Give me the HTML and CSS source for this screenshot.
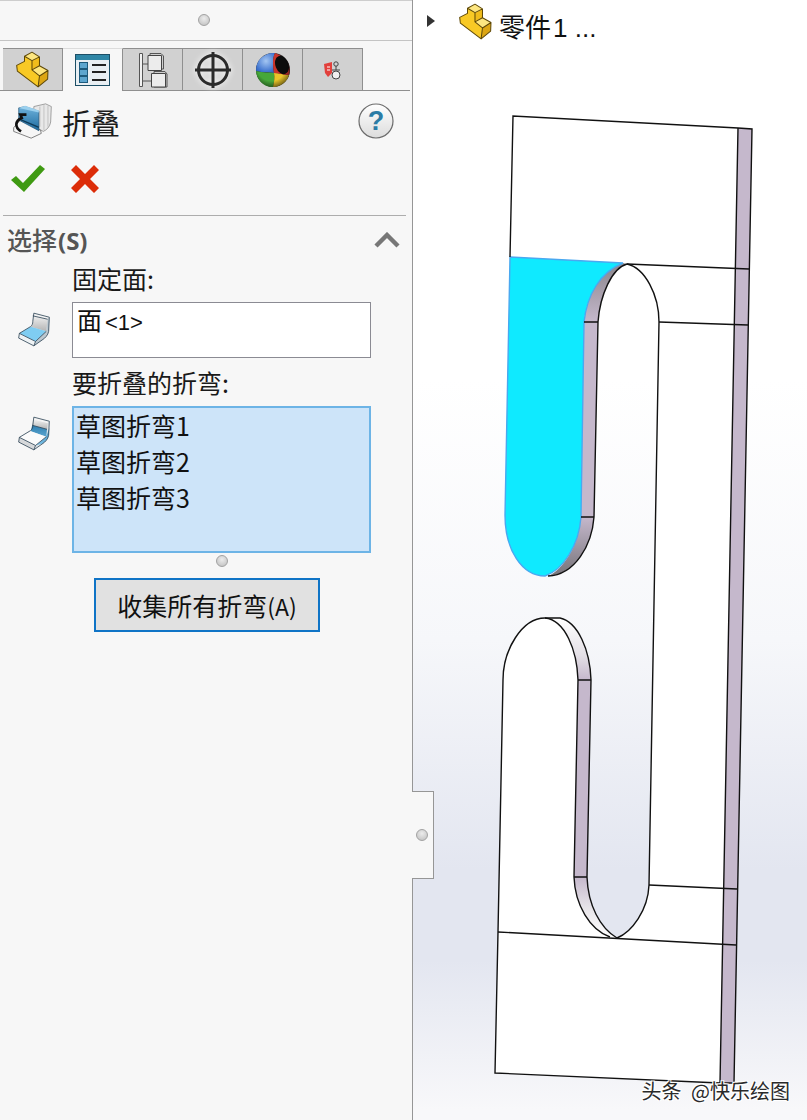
FILE: index.html
```html
<!DOCTYPE html>
<html lang="zh">
<head>
<meta charset="utf-8">
<title>折叠</title>
<link rel="stylesheet" href="styles.css">
</head>
<body>
<svg class="defs" width="0" height="0" aria-hidden="true">
  <defs>
    <linearGradient id="wallShade" x1="0" y1="0" x2="0" y2="1">
      <stop offset="0" stop-color="#efefef"/><stop offset="1" stop-color="#b4b4b4"/>
    </linearGradient>
    <linearGradient id="bandBlue" x1="0" y1="0" x2="0" y2="1">
      <stop offset="0" stop-color="#2f7fb0"/><stop offset="1" stop-color="#7cc2e8"/>
    </linearGradient>
    <linearGradient id="plateBlue" x1="0" y1="0" x2="0" y2="1">
      <stop offset="0" stop-color="#6fb2dc"/><stop offset="1" stop-color="#1c6a9e"/>
    </linearGradient>
    <linearGradient id="arcDark" x1="0" y1="0" x2="0" y2="1">
      <stop offset="0" stop-color="#8a868c"/><stop offset="1" stop-color="#c5b8cc"/>
    </linearGradient>
    <linearGradient id="arcDarkLow" x1="0" y1="0" x2="0" y2="1">
      <stop offset="0" stop-color="#c5b8cc"/><stop offset="1" stop-color="#77747a"/>
    </linearGradient>
    <linearGradient id="arcPale" x1="0" y1="0" x2="0" y2="1">
      <stop offset="0" stop-color="#ffffff"/><stop offset=".6" stop-color="#e4e0e6"/><stop offset="1" stop-color="#c5b8cc"/>
    </linearGradient>
    <linearGradient id="arcPaleLow" x1="0" y1="0" x2="0" y2="1">
      <stop offset="0" stop-color="#c5b8cc"/><stop offset=".5" stop-color="#e6e3e8"/><stop offset="1" stop-color="#ffffff"/>
    </linearGradient>
    <linearGradient id="helpFill" x1="0" y1="0" x2="0" y2="1">
      <stop offset="0" stop-color="#ffffff"/><stop offset="1" stop-color="#dcdcdc"/>
    </linearGradient>
    <radialGradient id="ballBlue" gradientUnits="userSpaceOnUse" cx="11" cy="9" r="18">
      <stop offset="0" stop-color="#a4c6f2"/><stop offset=".6" stop-color="#3f74cf"/><stop offset="1" stop-color="#1b4698"/>
    </radialGradient>
    <radialGradient id="ballShade" cx=".45" cy=".4" r=".6">
      <stop offset=".7" stop-color="#000" stop-opacity="0"/><stop offset="1" stop-color="#000" stop-opacity=".45"/>
    </radialGradient>
    <symbol id="part" viewBox="53 153 97 108">
      <path d="M57 212 55 195 78 183 78 168 100 181 100 208 122 226 118 258Z" fill="#f8c925"/>
      <path d="M78 168 100 156 122 170 100 181Z" fill="#fde680"/>
      <path d="M100 181 122 170 122 196 100 208Z" fill="#f0bc1c"/>
      <path d="M100 208 122 196 147 210 122 226Z" fill="#fde680"/>
      <path d="M122 226 147 210 146 235 118 258Z" fill="#dca513"/>
      <path d="M78 168 100 156 122 170 122 196 147 210 146 235 118 258 57 212 55 195 78 183ZM78 168 100 181 122 170M100 181 100 208 122 226 147 210M100 208 122 196M122 226 118 258" fill="none" stroke="#5e4806" stroke-width="3" stroke-linejoin="round"/>
    </symbol>
    <symbol id="face-floor" viewBox="38 35 95 103">
      <path d="M85 38 131 50 129 92C127 104 118 112 112 116L85 135 40 112 42 98 75 78 82 72Z" fill="#dfe3e6"/>
      <path d="M85 38 131 50 126 56 82 46Z" fill="#f4f4f4"/>
      <path d="M82 46 126 56 122 92 76 78 82 72Z" fill="url(#wallShade)"/>
      <path d="M42 98 76 78 122 92 90 122Z" fill="#7fcdf2"/>
      <path d="M42 98 90 122 85 135 40 112Z" fill="#eef2f4"/>
      <path d="M90 122 122 92 126 56 131 50 129 92C127 104 118 112 112 116L85 135Z" fill="#bcc8d0"/>
      <path d="M85 38 131 50 129 92C127 104 118 112 112 116L85 135 40 112 42 98 75 78C80 74 82 70 82 62ZM42 98 90 122 122 92M90 122 85 135M82 46 126 56" fill="none" stroke="#2d4355" stroke-width="2.4" stroke-linejoin="round"/>
    </symbol>
    <symbol id="face-bend" viewBox="38 35 95 103">
      <path d="M85 38 131 50 129 92C127 104 118 112 112 116L85 135 40 112 42 98 75 78 82 72Z" fill="#dfe3e6"/>
      <path d="M85 38 131 50 126 56 82 46Z" fill="#f4f4f4"/>
      <path d="M82 46 126 56 124 74 80 62Z" fill="url(#wallShade)"/>
      <path d="M80 62 124 74 122 96 131 70 129 92C127 104 120 110 112 116L90 122 122 96 76 80Z" fill="url(#bandBlue)"/>
      <path d="M42 98 76 80 122 96 90 122Z" fill="#fbfbfb"/>
      <path d="M42 98 90 122 85 135 40 112Z" fill="#d6d8da"/>
      <path d="M85 38 131 50 129 92C127 104 118 112 112 116L85 135 40 112 42 98 75 78C80 74 82 70 82 62ZM42 98 90 122 122 96M90 122 85 135M80 62 124 74" fill="none" stroke="#2d4355" stroke-width="2.4" stroke-linejoin="round"/>
    </symbol>
  </defs>
</svg>

<div class="app">
  <aside class="panel">
    <div class="grip"><span class="dot"></span></div>

    <nav class="tabs">
      <div class="tab">
        <svg width="33" height="37"><use href="#part"/></svg>
      </div>
      <div class="tab tab-active">
        <svg width="36" height="33" viewBox="0 0 36 33">
          <rect x=".5" y=".5" width="34" height="31" fill="#e9eff3" stroke="#1d4f66"/>
          <rect x="1" y="1" width="33" height="5" fill="#2f86a6"/>
          <g fill="#5da6cf" stroke="#1d5a7c">
            <rect x="4.5" y="8.5" width="8" height="6"/><rect x="4.5" y="15.5" width="8" height="6"/><rect x="4.5" y="22.5" width="8" height="6"/>
          </g>
          <path d="M17 11H31M17 18H31M17 26H31" stroke="#222" stroke-width="2"/>
        </svg>
      </div>
      <div class="tab">
        <svg width="30" height="36" viewBox="0 0 30 36">
          <path d="M1.500 1.500H4.500V34.500H1.500ZM4.500 12H10M4.500 29H14" fill="#f2f2f2" stroke="#555"/>
          <path d="M12 1.500H23L25.500 4V17H12Z" fill="#cfcfcf" stroke="#555"/>
          <path d="M10 3.500H23.500V18.500H10Z" fill="#ececec" stroke="#444"/>
          <path d="M16 19.500H27L29 22V35H16Z" fill="#cfcfcf" stroke="#555"/>
          <path d="M13.500 21.500H27.500V35H13.500Z" fill="#ececec" stroke="#444"/>
        </svg>
      </div>
      <div class="tab">
        <svg class="icon-glow" width="38" height="38" viewBox="0 0 38 38">
          <circle cx="19" cy="19" r="14.500" fill="none" stroke="#2b2b2b" stroke-width="3"/>
          <path d="M1 19H37M19 1V37" stroke="#2b2b2b" stroke-width="3"/>
        </svg>
      </div>
      <div class="tab">
        <svg width="36" height="36" viewBox="0 0 36 36">
          <circle cx="18" cy="18" r="17" fill="#2a2a2a"/>
          <path d="M18 1A17 17 0 0 0 1 19C8 21 14 20 19 21C18 14 17 7 20 1Z" fill="url(#ballBlue)"/>
          <path d="M19 21C14 20 8 21 1 19A17 17 0 0 0 18 35C19 30 20 26 19 21Z" fill="#46a83a"/>
          <path d="M19 21C20 26 19 30 18 35A17 17 0 0 0 34 23C29 23 24 21 19 21Z" fill="#e9c52a"/>
          <path d="M19 21C24 21 29 23 34 23C36 15 33 6 20 1C17 7 18 14 19 21Z" fill="#c8342c"/>
          <ellipse cx="27" cy="13" rx="6.500" ry="9.500" transform="rotate(-22 27 13)" fill="#0c0c0c"/>
          <circle cx="18" cy="18" r="17" fill="url(#ballShade)"/>
        </svg>
      </div>
      <div class="tab">
        <svg width="20" height="20" viewBox="0 0 20 20">
          <path d="M1 4 9 2V13L5 17 2 13Z" fill="#e2403c"/>
          <path d="M4 7H7M4 10H7" stroke="#fff" stroke-width="1.200"/>
          <circle cx="13" cy="4" r="2.200" fill="none" stroke="#444"/>
          <path d="M13 6V10M9 10H17" stroke="#444"/>
          <circle cx="13" cy="15" r="4" fill="#f0f0f0" stroke="#444"/>
        </svg>
      </div>
    </nav>

    <header class="title-row">
      <svg class="title-icon" width="39" height="36" viewBox="38 312 116 106">
        <path d="M100 322 135 314 152 322 150 368C148 382 138 392 128 396L100 380Z" fill="#e8e8e8" stroke="#7c7c7c" stroke-width="2"/>
        <path d="M118 322V382M130 318V392M142 320V382" stroke="#b0b0b0" stroke-width="2" fill="none"/>
        <path d="M40 385 60 362 120 392 122 402 92 416 40 396Z" fill="#f6f6f6" stroke="#666" stroke-width="2.400"/>
        <path d="M55 326 74 322 115 336V394L55 362Z" fill="url(#plateBlue)" stroke="#1e4e70" stroke-width="2"/>
        <path d="M55 326 74 320 115 334 115 340Z" fill="#9bd0ee"/>
        <path d="M62 362 115 384" stroke="#0f3a58" stroke-width="4"/>
        <path d="M78 346H60L64 356C44 364 42 384 62 396" fill="none" stroke="#111" stroke-width="8"/>
      </svg>
      <h1 class="title">折叠</h1>
      <svg class="help" width="36" height="36" viewBox="0 0 36 36" role="img" aria-label="帮助">
        <circle cx="18" cy="18" r="17" fill="url(#helpFill)" stroke="#6c6c6c" stroke-width="1.200"/>
        <text x="18" y="27" text-anchor="middle" class="help-mark">?</text>
      </svg>
    </header>

    <div class="actions">
      <svg width="34" height="28" viewBox="0 0 34 28">
        <path d="M0 15 5 11 12 18 29 0 34 4 13 27Z" fill="#3f9a12"/>
      </svg>
      <svg width="28" height="28" viewBox="0 0 28 28">
        <path d="M0 5 5 0 14 9 23 0 28 5 19 14 28 23 23 28 14 19 5 28 0 23 9 14Z" fill="#dc2c08"/>
      </svg>
    </div>

    <section class="section">
      <div class="section-head">
        <h2 class="section-title">选择<b>(S)</b></h2>
        <svg width="26" height="16" viewBox="0 0 26 16">
          <path d="M2 14 13 3 24 14" fill="none" stroke="#777" stroke-width="4.400"/>
        </svg>
      </div>

      <div class="field">
        <div class="field-label">固定面:</div>
        <svg class="face-icon" width="32" height="35"><use href="#face-floor"/></svg>
        <div class="box">面<span class="box-small">&lt;1&gt;</span></div>
      </div>

      <div class="field">
        <div class="field-label">要折叠的折弯:</div>
        <svg class="face-icon" width="32" height="35"><use href="#face-bend"/></svg>
        <ul class="box box-active">
          <li>草图折弯1</li>
          <li>草图折弯2</li>
          <li>草图折弯3</li>
        </ul>
      </div>

      <div class="list-grip"><span class="dot"></span></div>
      <button class="collect" type="button">收集所有折弯<span class="collect-key">(A)</span></button>
    </section>
  </aside>

  <main class="view">
    <svg class="model" viewBox="413 0 394 1120" width="394" height="1120">
      <path d="M513 116 738 128 720 1083 495 1073 498 932 503 680C503 650 522 618 545 618C565 620 577 650 578 680L574 877C575 905 590 930 610 937L617 938C632 932 648 910 649 885L659 322C659 295 645 268 627 264C612 268 600 295 598 322L594 517C592 545 575 575 548 576L505 515 510 257Z" fill="#fff"/>
      <path d="M738 128 752 129 734 1083 720 1083Z" fill="#c5b8cc"/>
      <path d="M623 263 627 264C612 268 600 295 598 322H584C587 295 600 272 623 263Z" fill="url(#arcDark)"/>
      <path d="M584 322H598L594 517H581Z" fill="#c5b8cc"/>
      <path d="M581 517H594C592 545 575 575 548 576C563 570 579 545 581 517Z" fill="url(#arcDarkLow)"/>
      <path d="M510 257 623 263C600 272 587 295 584 322L581 517C579 545 563 570 545 576C522 576 505 550 505 515Z" fill="#0feaff" stroke="#4aa8f0" stroke-width="1.400"/>
      <path d="M545 618H560C578 622 590 650 591 680H578C577 650 565 620 545 618Z" fill="url(#arcPale)"/>
      <path d="M578 680H591L587 877H574Z" fill="#c5b8cc"/>
      <path d="M574 877H587C588 905 600 928 617 938L610 937C590 930 575 905 574 877Z" fill="url(#arcPaleLow)"/>
      <g class="edges">
        <path d="M510 257 513 116 738 128 752 129 734 1083 720 1083 495 1073 498 932 503 680C503 650 522 618 545 618H560C578 622 590 650 591 680L587 877C588 905 600 928 617 938C632 932 648 910 649 885L659 322C659 295 645 268 627 264C612 268 600 295 598 322L594 517C592 545 575 575 548 576"/>
        <path d="M738 128 720 1083M578 680 574 877C575 905 590 930 610 937M545 618C565 620 577 650 578 680M578 680H591M574 877H587M584 322H598M581 517H594"/>
        <path d="M627 264 749 269M659 322 748 325M649 885 737 889M498 932 736 945"/>
      </g>
    </svg>

    <div class="tree-row">
      <span class="tree-arrow"></span>
      <svg class="tree-icon" width="33" height="37"><use href="#part"/></svg>
      <span class="tree-name">零件<span class="tree-num">1 ...</span></span>
    </div>

    <div class="notch"><span class="dot"></span></div>
    <div class="watermark">头条 @快乐绘图</div>
  </main>
</div>
</body>
</html>
```

FILE: styles.css
```css
* { box-sizing: border-box; }

html, body {
  margin: 0;
  padding: 0;
}

body {
  width: 807px;
  height: 1120px;
  overflow: hidden;
  font-family: "Noto Sans CJK SC", "Noto Sans", sans-serif;
  color: #111;
}

.defs { display: block; height: 0; }

.app {
  display: flex;
  width: 807px;
  height: 1120px;
}

/* Left property panel */
.panel {
  width: 413px;
  height: 1120px;
  flex: none;
  background: #f7f7f7;
  border-right: 1px solid #969696;
}

.dot {
  display: block;
  width: 12px;
  height: 12px;
  border-radius: 50%;
  border: 1px solid #a2a2a2;
  background: radial-gradient(circle at 50% 35%, #ececec, #bdbdbd);
}

.grip {
  height: 41px;
  display: flex;
  align-items: center;
  justify-content: center;
  padding: 0 5px 1px 0;
  border-top: 1px solid #cdcdcd;
  border-bottom: 1px solid #c4c4c4;
}

.tabs {
  display: flex;
  height: 50px;
  padding: 7px 0 0 3px;
  border-bottom: 1px solid #8f8f8f;
  margin-right: 2px;
}

.tab {
  width: 60px;
  height: 43px;
  display: flex;
  align-items: center;
  justify-content: center;
  background: #d1d1d1;
  border: 1px solid #8f8f8f;
  border-left: 0;
}

.tab-active {
  background: #f7f7f7;
  border-top-color: #dcdcdc;
  border-bottom: 0;
}

.icon-glow { filter: drop-shadow(0 0 3px #fff); }

.title-row {
  display: flex;
  align-items: center;
  height: 62px;
  padding: 0 18px 2px 13px;
}

.title-icon { flex: none; }

.title {
  flex: 1;
  margin: 2px 0 0 10px;
  font-size: 29px;
  font-weight: 400;
  line-height: 40px;
  color: #1c1c1c;
}

.help { flex: none; }

.help-mark {
  font-family: "Liberation Sans", sans-serif;
  font-size: 27px;
  font-weight: 700;
  fill: #2b7ca6;
}

.actions {
  display: flex;
  align-items: center;
  gap: 26px;
  height: 63px;
  padding: 0 0 10px 8px;
  border-bottom: 1px solid #adadad;
  margin: 0 6px 0 3px;
}

.section-head {
  display: flex;
  align-items: center;
  justify-content: space-between;
  height: 49px;
  padding: 0 12px 2px 7px;
}

.section-title {
  margin: 0;
  font-size: 25px;
  font-weight: 500;
  line-height: 30px;
  color: #555;
}

.section-title b {
  font-family: "Open Sans", sans-serif;
  font-size: 24px;
  font-weight: 700;
  margin-left: 1px;
}

.field {
  display: grid;
  grid-template-columns: 72px 299px;
  align-items: start;
}

.field-label {
  grid-column: 2;
  height: 37px;
  font-size: 25px;
  line-height: 26px;
  color: #1a1a1a;
}

.face-icon {
  grid-column: 1;
  margin: 10px 0 0 18px;
}

.box {
  grid-column: 2;
  height: 56px;
  margin: 0 0 11px;
  padding: 0 0 0 4px;
  list-style: none;
  background: #fff;
  border: 1px solid #8b8b93;
  font-size: 25px;
  line-height: 33px;
  color: #111;
}

.box-small {
  font-family: "Liberation Sans", sans-serif;
  font-size: 22px;
  margin-left: 3px;
}

.box-active {
  height: 147px;
  margin: 0;
  padding: 0 0 0 2px;
  background: #cde4f9;
  border: 2px solid #6db4e6;
  line-height: 36px;
}

.box-active li:first-child { margin-top: -1px; }

.list-grip {
  display: flex;
  justify-content: center;
  width: 299px;
  margin: 1px 0 0 72px;
  height: 24px;
  padding-top: 1px;
}

.collect {
  display: block;
  width: 226px;
  height: 54px;
  margin: 0 0 0 94px;
  padding: 0;
  background: #e1e1e1;
  border: 2px solid #0f74c6;
  font-family: inherit;
  font-size: 25px;
  line-height: 50px;
  color: #111;
}

.collect-key { font-size: 23px; }

/* Graphics viewport */
.view {
  position: relative;
  flex: 1;
  height: 1120px;
  background: linear-gradient(180deg, #fff 0, #fff 380px, #f6f7fa 640px, #e3e6f0 870px, #e3e6f0 960px, #f8f8fa 1110px);
}

.model {
  position: absolute;
  left: 0;
  top: 0;
}

.edges path {
  fill: none;
  stroke: #111;
  stroke-width: 1.4;
}

.tree-row {
  position: relative;
  display: flex;
  align-items: center;
  height: 44px;
  padding: 2px 0 0 14px;
}

.tree-arrow {
  width: 0;
  height: 0;
  border-left: 8px solid #333;
  border-top: 6px solid transparent;
  border-bottom: 6px solid transparent;
  margin: -4px 24px 0 0;
}

.tree-icon { margin-top: -4px; flex: none; }

.tree-name {
  margin-left: 7px;
  margin-top: 7px;
  font-size: 26px;
  line-height: 34px;
  color: #111;
}

.tree-num {
  font-family: "Liberation Sans", sans-serif;
  margin-left: 2px;
}

.notch {
  position: absolute;
  left: -1px;
  top: 791px;
  width: 22px;
  height: 88px;
  display: flex;
  align-items: center;
  justify-content: center;
  padding-right: 2px;
  background: #f7f7f7;
  border: 1px solid #969696;
  border-left: 0;
}

.watermark {
  position: absolute;
  right: 17px;
  top: 1076px;
  font-size: 20px;
  line-height: 30px;
  word-spacing: 5px;
  color: #2a2a2a;
  text-shadow: 1px 1px 0 #fff, -1px -1px 0 #fff, 1px -1px 0 #fff, -1px 1px 0 #fff;
}
```
